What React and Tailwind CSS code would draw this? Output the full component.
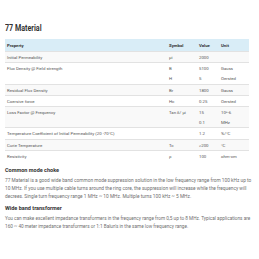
import React from 'react'

const rows = [
  { property: 'Initial Permeability', symbol: ['μi'], value: ['2000'], unit: [''] },
  { property: 'Flux Density @ Field strength', symbol: ['B', 'H'], value: ['5100', '5'], unit: ['Gauss', 'Oersted'] },
  { property: 'Residual Flux Density', symbol: ['Br'], value: ['1800'], unit: ['Gauss'] },
  { property: 'Coersive force', symbol: ['Hc'], value: ['0.25'], unit: ['Oersted'] },
  { property: 'Loss Factor @ Frequency', symbol: ['Tan δ/ μi'], value: ['15', '0.1'], unit: ['10^-6', 'MHz'] },
  { property: 'Temperature Coefficient of Initial Permeability (20 -70°C)', symbol: [''], value: ['1.2'], unit: ['%/°C'] },
  { property: 'Curie Temperature', symbol: ['Tc'], value: ['>200'], unit: ['°C'] },
  { property: 'Resistivity', symbol: ['ρ'], value: ['100'], unit: ['ohm-cm'] },
]

function Lines({ items }) {
  return (
    <div className="flex flex-col gap-[5px]">
      {items.map((t, i) => (
        <span key={i} className="block h-[5px]">{t}</span>
      ))}
    </div>
  )
}

export default function App() {
  return (
    <div className="w-[259px] h-[259px] overflow-hidden bg-white px-[5px] pt-[23px] font-['Roboto',sans-serif] text-[#333]">
      <h3 className="h-[10px] text-[8.5px] font-bold leading-[10px]">
        <span className="inline-block origin-left scale-x-[0.84]">77 Material</span>
      </h3>

      <table className="mt-[6px] w-[244px] border-collapse text-[4.3px] leading-[5px]">
        <thead>
          <tr className="bg-[#d9edf7] text-left font-bold text-[#333]">
            <th className="pl-[2px] py-[3.5px] w-[162px]">Property</th>
            <th className="pl-[2px] py-[3.5px] w-[30px]">Symbol</th>
            <th className="pl-[2px] py-[3.5px] w-[22px]">Value</th>
            <th className="pl-[2px] py-[3.5px]">Unit</th>
          </tr>
        </thead>
        <tbody className="text-[#555]">
          {rows.map((r, i) => (
            <tr key={i} className={`border-t border-[#e2e2e2] align-top ${i % 2 === 0 ? 'bg-[#f9f9f9]' : 'bg-white'}`}>
              <td className="pl-[2px] pt-[3px] pb-[2.25px]">{r.property}</td>
              <td className="pl-[2px] pt-[3px] pb-[2.25px]"><Lines items={r.symbol} /></td>
              <td className="pl-[2px] pt-[3px] pb-[2.25px]"><Lines items={r.value} /></td>
              <td className="pl-[2px] pt-[3px] pb-[2.25px]"><Lines items={r.unit} /></td>
            </tr>
          ))}
        </tbody>
      </table>

      <h4 className="mt-[6px] text-[5.5px] font-bold leading-[7px]">Common mode choke</h4>
      <p className="mt-[3px] text-[4.8px] leading-[8px] text-[#707070]">
        77 Material is a good wide band common mode suppression solution in the low frequency range from 100 kHz up to 10 MHz. If you use multiple cable turns around the ring core, the suppression will increase while the frequency will decrees. Single turn frequency range 1 MHz ~ 10 MHz. Multiple turns 100 kHz ~ 5 MHz.
      </p>

      <h4 className="mt-[4px] text-[5.5px] font-bold leading-[7px]">Wide band transformer</h4>
      <p className="mt-[3px] text-[4.7px] leading-[8px] text-[#707070]">
        You can make excellent impedance transformers in the frequency range from 0,5 up to 8 MHz. Typical applications are 160 ~ 40 meter impedance transformers or 1:1 Balun's in the same low frequency range.
      </p>
    </div>
  )
}
